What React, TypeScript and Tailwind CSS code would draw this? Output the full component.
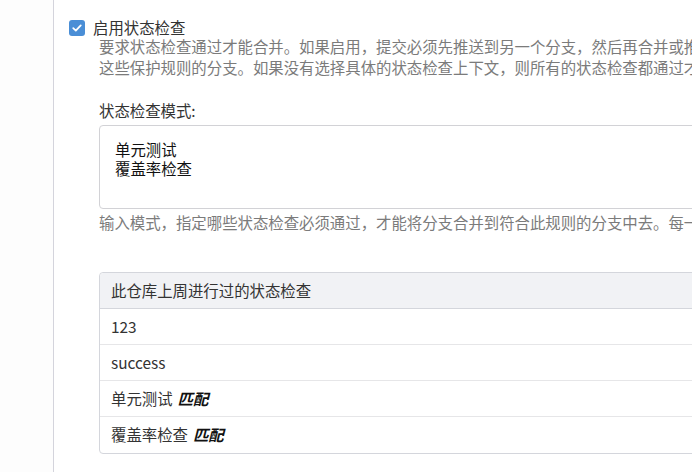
import React from "react";

const rows: { name: string; matched?: boolean }[] = [
    { name: "123" },
    { name: "success" },
    { name: "单元测试", matched: true },
    { name: "覆盖率检查", matched: true },
];

// Checked checkbox, drawn by hand
const CheckBox = () => (
    <div className="w-[16px] h-[16px] rounded-[3px] bg-[#4a8ed6] flex items-center justify-center shrink-0">
        <svg viewBox="0 0 16 16" className="w-[12px] h-[12px]">
            <path
                d="M3 8.2 L6.4 11.4 L13 4.6"
                fill="none"
                stroke="#ffffff"
                strokeWidth="2.4"
                strokeLinecap="round"
                strokeLinejoin="round"
            />
        </svg>
    </div>
);

export default function App() {
    return (
        <div className="w-[692px] h-[472px] overflow-hidden bg-white flex font-['Noto_Sans_CJK_SC','Noto_Sans',sans-serif] text-[15.4px]">
            {/* Left rail */}
            <div className="w-[54px] shrink-0 border-r border-[#d4d4dc] bg-[#fdfdfd]" />

            <div className="w-[900px] shrink-0 pl-[15px] pt-[19px]">
                {/* Enable checkbox */}
                <div className="flex items-center gap-[8px] h-[17px] leading-[17px]">
                    <CheckBox />
                    <span className="text-[#333333]">启用状态检查</span>
                </div>

                <div className="ml-[30px]">
                    <p className="leading-[20.5px] text-[#7b7b7b] whitespace-nowrap">
                        要求状态检查通过才能合并。如果启用，提交必须先推送到另一个分支，然后再合并或推送到符合这些保护规则的分支。
                        <br />
                        这些保护规则的分支。如果没有选择具体的状态检查上下文，则所有的状态检查都通过才能合并。
                    </p>

                    {/* Pattern textarea */}
                    <div className="mt-[23px] leading-[20px] text-[#333333]">状态检查模式:</div>
                    <div className="mt-[5px] h-[84px] border border-[#d2d2d6] rounded-[4px] pl-[15px] pt-[14px] leading-[19px] text-[#111111]">
                        <div>单元测试</div>
                        <div>覆盖率检查</div>
                    </div>
                    <p className="mt-[3px] leading-[20px] text-[#7b7b7b] whitespace-nowrap">
                        输入模式，指定哪些状态检查必须通过，才能将分支合并到符合此规则的分支中去。每一行指定一个模式。
                    </p>

                    {/* Recent checks table */}
                    <div className="mt-[40px] border border-[#d4d6dc] rounded-[4px] text-[#333333]">
                        <div className="h-[36px] flex items-center px-[11px] bg-[#f1f2f5] border-b border-[#d4d6dc] rounded-t-[4px]">
                            此仓库上周进行过的状态检查
                        </div>
                        {rows.map((row, i) => (
                            <div
                                key={row.name}
                                className={`h-[36px] flex items-center px-[11px] ${
                                    i < rows.length - 1 ? "border-b border-[#e6e6e8]" : ""
                                }`}
                            >
                                {row.name}
                                {row.matched && (
                                    <strong className="ml-[5px] italic font-bold text-[#111111]">匹配</strong>
                                )}
                            </div>
                        ))}
                    </div>
                </div>
            </div>
        </div>
    );
}
